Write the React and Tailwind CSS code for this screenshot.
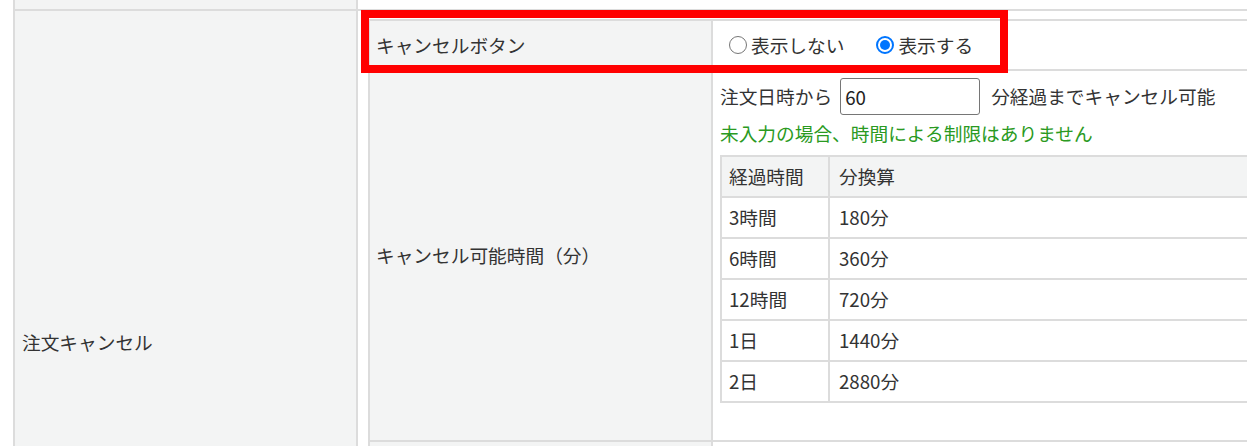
const rows = [
  ["3時間", "180分"],
  ["6時間", "360分"],
  ["12時間", "720分"],
  ["1日", "1440分"],
  ["2日", "2880分"],
];

function Radio({ checked }) {
  if (checked) {
    return (
      <span className="w-[18px] h-[18px] rounded-full border-2 border-[#0075ff] bg-white flex items-center justify-center shrink-0">
        <span className="w-[10px] h-[10px] rounded-full bg-[#0075ff]" />
      </span>
    );
  }
  return <span className="w-[18px] h-[18px] rounded-full border-[1.5px] border-[#767676] bg-white shrink-0" />;
}

function NestedTable() {
  return (
    <div className="w-[1000px] border-t-2 border-l-2 border-[#dcdcdc]">
      {/* キャンセルボタン */}
      <div className="flex border-b-2 border-[#dcdcdc]">
        <div className="w-[343px] h-[48px] shrink-0 flex items-center pl-[6px] bg-[#f3f4f4] border-r-2 border-[#dcdcdc]">
          キャンセルボタン
        </div>
        <div className="flex-1 flex items-center pl-[16px]">
          <label className="flex items-center gap-[4px]">
            <Radio />
            表示しない
          </label>
          <label className="flex items-center gap-[4px] ml-[32px]">
            <Radio checked />
            表示する
          </label>
        </div>
      </div>

      {/* キャンセル可能時間 */}
      <div className="flex border-b-2 border-[#dcdcdc]">
        <div className="w-[343px] h-[369px] shrink-0 flex items-center pl-[6px] bg-[#f3f4f4] border-r-2 border-[#dcdcdc]">
          キャンセル可能時間（分）
        </div>
        <div className="flex-1 pl-[7px] pt-[7px]">
          <div className="flex items-center">
            <span>注文日時から</span>
            <input
              type="text"
              defaultValue="60"
              readOnly
              className="ml-[8px] w-[140px] h-[37px] border border-[#767676] rounded-[3px] px-[4px] text-[#222] bg-white outline-none"
            />
            <span className="ml-[11px]">分経過までキャンセル可能</span>
          </div>
          <div className="mt-[4px] leading-[28px] text-[#2a9a22]">未入力の場合、時間による制限はありません</div>
          <div className="mt-[8px] border-t-2 border-l-2 border-[#dcdcdc]">
            <div className="flex h-[41px] border-b-2 border-[#dcdcdc] bg-[#f3f4f4]">
              <div className="w-[108px] flex items-center pl-[7px] border-r-2 border-[#dcdcdc]">経過時間</div>
              <div className="flex-1 flex items-center pl-[9px]">分換算</div>
            </div>
            {rows.map(([t, m]) => (
              <div key={t} className="flex h-[41px] border-b-2 border-[#dcdcdc]">
                <div className="w-[108px] flex items-center pl-[7px] border-r-2 border-[#dcdcdc]">{t}</div>
                <div className="flex-1 flex items-center pl-[9px]">{m}</div>
              </div>
            ))}
          </div>
        </div>
      </div>

      <div className="flex border-b-2 border-[#dcdcdc]">
        <div className="w-[343px] h-[220px] shrink-0 bg-[#f3f4f4] border-r-2 border-[#dcdcdc]" />
        <div className="flex-1" />
      </div>
    </div>
  );
}

export default function App() {
  return (
    <div className="relative w-[1247px] h-[446px] overflow-hidden bg-white text-[#333] text-[18.7px] font-['Noto_Sans_CJK_JP','Noto_Sans',sans-serif]">
      <div className="ml-[13px]">
        <div className="flex border-b-2 border-[#dcdcdc]">
          <div className="w-[345px] h-[9px] shrink-0 bg-[#f3f4f4] border-x-2 border-[#dcdcdc]" />
          <div className="flex-1" />
        </div>
        <div className="flex">
          <div className="w-[345px] shrink-0 flex items-center pl-[7px] bg-[#f3f4f4] border-x-2 border-[#dcdcdc]">
            注文キャンセル
          </div>
          <div className="pl-[10px] pt-[8px] pb-[9px]">
            <NestedTable />
          </div>
        </div>
      </div>

      {/* annotation frame */}
      <div className="absolute left-[361px] top-[10px] w-[647px] h-[63px] border-[8px] border-[#ff0000]" />
    </div>
  );
}
